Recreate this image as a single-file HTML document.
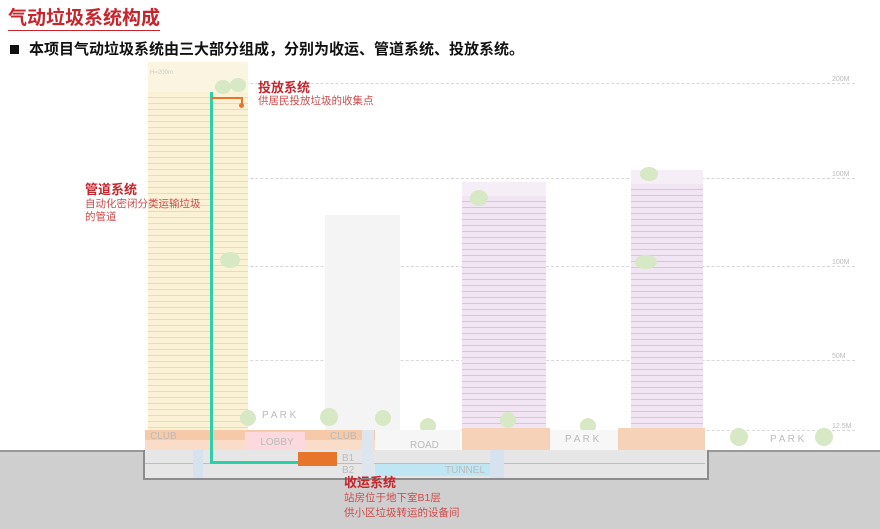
<!DOCTYPE html>
<html><head><meta charset="utf-8"><style>
body{margin:0;width:880px;height:527px;overflow:hidden;background:#fff;position:relative;font-family:"Liberation Sans","Noto Sans CJK SC",sans-serif}
.a{position:absolute}
.hl{position:absolute;height:0;border-top:1px dashed #d8d8d8;left:150px;width:705px}
.lb{position:absolute;font-size:7px;color:#bbb;left:832px}
.red{color:#c8242b}
.yt{background:repeating-linear-gradient(#fbf2d6 0 5px,#e9dcb4 5px 6px)}
.pt{background:repeating-linear-gradient(#f1e4f3 0 5px,#d9c4dc 5px 6px)}
.tree{position:absolute;border-radius:50%;background:#d6e8c4}
.bx{position:absolute;font-size:10px;color:#bbb;text-align:center}
.t{font-size:13px;font-weight:bold;line-height:15px;color:#c8242b}
.d{font-size:10.5px;color:#d04a4a;line-height:13px}
</style></head><body>
<div class="a red" style="left:8px;top:7px;font-size:19px;font-weight:bold;border-bottom:1.5px solid #c8242b;line-height:23px">气动垃圾系统构成</div>
<div class="a" style="left:10px;top:40px;font-size:15px;font-weight:bold;color:#111;line-height:19px"><span style="display:inline-block;width:9px;height:9px;background:#111;margin-right:10px"></span>本项目气动垃圾系统由三大部分组成，分别为收运、管道系统、投放系统。</div>

<div class="hl" style="top:83px"></div><div class="lb" style="top:76px">200M</div>
<div class="hl" style="top:178px"></div><div class="lb" style="top:171px">100M</div>
<div class="hl" style="top:266px"></div><div class="lb" style="top:259px">100M</div>
<div class="hl" style="top:360px"></div><div class="lb" style="top:353px">50M</div>
<div class="hl" style="top:430px"></div><div class="lb" style="top:423px">12.5M</div>

<div class="a" style="left:148px;top:62px;width:100px;height:30px;background:#fbf4e0"></div>
<div class="a yt" style="left:148px;top:92px;width:100px;height:338px"></div>
<div class="a" style="left:150px;top:70px;font-size:6px;color:#ccc">H=200m</div>
<div class="a" style="left:325px;top:215px;width:75px;height:215px;background:#f4f4f4"></div>
<div class="a" style="left:462px;top:182px;width:84px;height:14px;background:#f5eef6"></div>
<div class="a pt" style="left:462px;top:196px;width:84px;height:234px"></div>
<div class="a" style="left:631px;top:170px;width:72px;height:14px;background:#f5eef6"></div>
<div class="a pt" style="left:631px;top:184px;width:72px;height:246px"></div>

<div class="tree" style="left:215px;top:80px;width:16px;height:14px"></div>
<div class="tree" style="left:230px;top:78px;width:16px;height:14px"></div>
<div class="tree" style="left:220px;top:252px;width:20px;height:16px"></div>
<div class="tree" style="left:470px;top:190px;width:18px;height:16px"></div>
<div class="tree" style="left:640px;top:167px;width:18px;height:14px"></div>
<div class="tree" style="left:635px;top:255px;width:22px;height:14px"></div>
<div class="tree" style="left:730px;top:428px;width:18px;height:18px"></div>
<div class="tree" style="left:815px;top:428px;width:18px;height:18px"></div>
<div class="tree" style="left:240px;top:410px;width:16px;height:16px"></div>
<div class="tree" style="left:320px;top:408px;width:18px;height:18px"></div>
<div class="tree" style="left:375px;top:410px;width:16px;height:16px"></div>
<div class="tree" style="left:420px;top:418px;width:16px;height:16px"></div>
<div class="tree" style="left:500px;top:412px;width:16px;height:16px"></div>
<div class="tree" style="left:580px;top:418px;width:16px;height:16px"></div>

<div class="a" style="left:0;top:450px;width:880px;height:77px;background:#cfcfcf;border-top:2px solid #999"></div>
<div class="a" style="left:143px;top:450px;width:562px;height:28px;background:#e6e6e6;border:2px solid #8c8c8c;border-top:none"></div>
<div class="a" style="left:145px;top:463px;width:560px;height:1px;background:#bdbdbd"></div>
<div class="a" style="left:145px;top:430px;width:230px;height:10px;background:#f6c9a8"></div>
<div class="a" style="left:145px;top:440px;width:230px;height:10px;background:#f9ddc8"></div>
<div class="a" style="left:245px;top:432px;width:60px;height:18px;background:#fbd9de"></div>
<div class="bx" style="left:247px;top:437px;width:60px">LOBBY</div>
<div class="bx" style="left:150px;top:431px">CLUB</div>
<div class="bx" style="left:330px;top:431px">CLUB</div>
<div class="a" style="left:362px;top:430px;width:12px;height:48px;background:#dde6ee"></div>
<div class="a" style="left:375px;top:430px;width:85px;height:20px;background:#f6f6f6"></div>
<div class="bx" style="left:410px;top:440px">ROAD</div>
<div class="a" style="left:462px;top:428px;width:88px;height:22px;background:#f6d2b8"></div>
<div class="a" style="left:550px;top:430px;width:70px;height:20px;background:#f7f7f7"></div>
<div class="bx" style="left:565px;top:434px">P A R K</div>
<div class="a" style="left:618px;top:428px;width:87px;height:22px;background:#f6d2b8"></div>
<div class="bx" style="left:770px;top:434px">P A R K</div>
<div class="bx" style="left:262px;top:410px">P A R K</div>
<div class="a" style="left:375px;top:464px;width:115px;height:12px;background:#bfe6f3"></div>
<div class="bx" style="left:445px;top:465px">TUNNEL</div>
<div class="bx" style="left:342px;top:453px">B1</div>
<div class="bx" style="left:342px;top:465px">B2</div>
<div class="a" style="left:490px;top:450px;width:14px;height:28px;background:#d6e2ee"></div>
<div class="a" style="left:193px;top:450px;width:10px;height:28px;background:#d6e2ee"></div>
<div class="a" style="left:298px;top:452px;width:39px;height:14px;background:#e8752c"></div>

<div class="a" style="left:210px;top:92px;width:3px;height:372px;background:#2bd0a8"></div>
<div class="a" style="left:210px;top:461px;width:88px;height:3px;background:#2bd0a8"></div>
<div class="a" style="left:211px;top:97px;width:31px;height:2px;background:#e8752c"></div>
<div class="a" style="left:241px;top:97px;width:2px;height:8px;background:#e8752c"></div>
<div class="a" style="left:239px;top:103px;width:5px;height:5px;border-radius:50%;background:#e8752c"></div>

<div class="a t" style="left:258px;top:80px">投放系统</div>
<div class="a d" style="left:258px;top:95px">供居民投放垃圾的收集点</div>
<div class="a t" style="left:85px;top:182px">管道系统</div>
<div class="a d" style="left:85px;top:198px">自动化密闭分类运输垃圾<br>的管道</div>
<div class="a t" style="left:344px;top:475px">收运系统</div>
<div class="a d" style="left:344px;top:491px;line-height:15px">站房位于地下室B1层<br>供小区垃圾转运的设备间</div>
</body></html>
